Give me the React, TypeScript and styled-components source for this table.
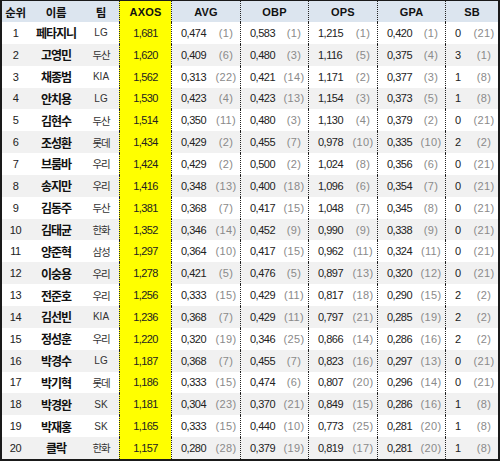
import React from "react";
import styled, { createGlobalStyle } from "styled-components";

const GlobalStyle = createGlobalStyle`
  html, body { margin: 0; padding: 0; background: #fff; }
  body { font-family: "Liberation Sans", "Noto Sans CJK KR", sans-serif; }
  * { box-sizing: border-box; }
`;

const COLS = "27px 54px 36px 52px 69px 68px 69px 68px 53px";

const Table = styled.div`
  width: 500px;
  height: 461px;
  border-top: 1px solid #1a1a1a;
  border-left: 2px solid #1a1a1a;
  border-right: 2px solid #1a1a1a;
  border-bottom: 2px solid #1a1a1a;
  display: flex;
  flex-direction: column;
`;

const HeaderRow = styled.div`
  display: grid;
  grid-template-columns: ${COLS};
  height: 21px;
  flex: none;
  background: #dce5ef;
`;

const Row = styled.div<{ $alt: boolean }>`
  display: grid;
  grid-template-columns: ${COLS};
  flex: 1;
  background: ${(p) => (p.$alt ? "#f1f1f1" : "#ffffff")};
`;

const Cell = styled.div<{ $dotted?: boolean; $yellow?: boolean }>`
  display: flex;
  align-items: center;
  justify-content: center;
  min-width: 0;
  border-left: ${(p) => (p.$dotted ? "1px dotted #222" : "none")};
  background: ${(p) => (p.$yellow ? "#ffff00" : "transparent")};
`;

const HeadText = styled.span<{ $ko?: boolean }>`
  font-family: ${(p) =>
    p.$ko ? '"Noto Sans CJK KR", sans-serif' : '"Liberation Sans", sans-serif'};
  font-weight: bold;
  font-size: ${(p) => (p.$ko ? "11.5px" : "11px")};
  color: #111;
  letter-spacing: ${(p) => (p.$ko ? "-0.3px" : "0.2px")};
`;

const RankNo = styled.span`
  font-family: "Liberation Sans", sans-serif;
  font-size: 11px;
  color: #222;
  letter-spacing: -0.4px;
`;

const Name = styled.span`
  font-family: "Noto Sans CJK KR", sans-serif;
  font-weight: bold;
  font-size: 12px;
  letter-spacing: -1px;
  color: #111;
`;

const Team = styled.span<{ $ko: boolean }>`
  font-family: ${(p) =>
    p.$ko ? '"Noto Sans CJK KR", sans-serif' : '"Liberation Sans", sans-serif'};
  font-size: ${(p) => (p.$ko ? "10.5px" : "10px")};
  letter-spacing: ${(p) => (p.$ko ? "-1.2px" : "0")};
  color: #333;
`;

const AxosValue = styled.span`
  font-family: "Liberation Sans", sans-serif;
  font-size: 11px;
  letter-spacing: -0.6px;
  color: #222;
`;

const StatCell = styled(Cell)`
  justify-content: space-between;
  padding-left: 9px;
`;

const Value = styled.span`
  font-family: "Liberation Sans", sans-serif;
  font-size: 11px;
  letter-spacing: -0.5px;
  color: #222;
`;

const Rank = styled.span`
  width: 28px;
  text-align: center;
  font-family: "Liberation Sans", sans-serif;
  font-size: 11px;
  letter-spacing: 0.3px;
  color: #8a8a8a;
`;

type Stat = [string, number];
type Player = {
  no: number;
  name: string;
  team: string;
  axos: string;
  stats: Stat[];
};

const data: Player[] = [
  { no: 1, name: "페타지니", team: "LG", axos: "1,681", stats: [["0,474", 1], ["0,583", 1], ["1,215", 1], ["0,420", 1], ["0", 21]] },
  { no: 2, name: "고영민", team: "두산", axos: "1,620", stats: [["0,409", 6], ["0,480", 3], ["1,116", 5], ["0,375", 4], ["3", 1]] },
  { no: 3, name: "채종범", team: "KIA", axos: "1,562", stats: [["0,313", 22], ["0,421", 14], ["1,171", 2], ["0,377", 3], ["1", 8]] },
  { no: 4, name: "안치용", team: "LG", axos: "1,530", stats: [["0,423", 4], ["0,423", 13], ["1,154", 3], ["0,373", 5], ["1", 8]] },
  { no: 5, name: "김현수", team: "두산", axos: "1,514", stats: [["0,350", 11], ["0,480", 3], ["1,130", 4], ["0,379", 2], ["0", 21]] },
  { no: 6, name: "조성환", team: "롯데", axos: "1,434", stats: [["0,429", 2], ["0,455", 7], ["0,978", 10], ["0,335", 10], ["2", 2]] },
  { no: 7, name: "브룸바", team: "우리", axos: "1,424", stats: [["0,429", 2], ["0,500", 2], ["1,024", 8], ["0,356", 6], ["0", 21]] },
  { no: 8, name: "송지만", team: "우리", axos: "1,416", stats: [["0,348", 13], ["0,400", 18], ["1,096", 6], ["0,354", 7], ["0", 21]] },
  { no: 9, name: "김동주", team: "두산", axos: "1,381", stats: [["0,368", 7], ["0,417", 15], ["1,048", 7], ["0,345", 8], ["0", 21]] },
  { no: 10, name: "김태균", team: "한화", axos: "1,352", stats: [["0,346", 14], ["0,452", 9], ["0,990", 9], ["0,338", 9], ["0", 21]] },
  { no: 11, name: "양준혁", team: "삼성", axos: "1,297", stats: [["0,364", 10], ["0,417", 15], ["0,962", 11], ["0,324", 11], ["0", 21]] },
  { no: 12, name: "이숭용", team: "우리", axos: "1,278", stats: [["0,421", 5], ["0,476", 5], ["0,897", 13], ["0,320", 12], ["0", 21]] },
  { no: 13, name: "전준호", team: "우리", axos: "1,256", stats: [["0,333", 15], ["0,429", 11], ["0,817", 18], ["0,290", 15], ["2", 2]] },
  { no: 14, name: "김선빈", team: "KIA", axos: "1,236", stats: [["0,368", 7], ["0,429", 11], ["0,797", 21], ["0,285", 19], ["2", 2]] },
  { no: 15, name: "정성훈", team: "우리", axos: "1,220", stats: [["0,320", 19], ["0,346", 25], ["0,866", 14], ["0,286", 16], ["2", 2]] },
  { no: 16, name: "박경수", team: "LG", axos: "1,187", stats: [["0,368", 7], ["0,455", 7], ["0,823", 16], ["0,297", 13], ["0", 21]] },
  { no: 17, name: "박기혁", team: "롯데", axos: "1,186", stats: [["0,333", 15], ["0,474", 6], ["0,807", 20], ["0,296", 14], ["0", 21]] },
  { no: 18, name: "박경완", team: "SK", axos: "1,181", stats: [["0,304", 23], ["0,370", 21], ["0,849", 15], ["0,286", 16], ["1", 8]] },
  { no: 19, name: "박재홍", team: "SK", axos: "1,165", stats: [["0,333", 15], ["0,440", 10], ["0,773", 25], ["0,281", 20], ["1", 8]] },
  { no: 20, name: "클락", team: "한화", axos: "1,157", stats: [["0,280", 28], ["0,379", 19], ["0,819", 17], ["0,281", 20], ["1", 8]] },
];

const statHeads = ["AVG", "OBP", "OPS", "GPA", "SB"];
const isKorean = (s: string) => /[\uac00-\ud7a3]/.test(s);

export default function App() {
  return (
    <>
      <GlobalStyle />
      <Table>
        <HeaderRow>
          <Cell><HeadText $ko>순위</HeadText></Cell>
          <Cell><HeadText $ko>이름</HeadText></Cell>
          <Cell><HeadText $ko>팀</HeadText></Cell>
          <Cell $dotted $yellow><HeadText>AXOS</HeadText></Cell>
          {statHeads.map((h) => (
            <Cell key={h} $dotted><HeadText>{h}</HeadText></Cell>
          ))}
        </HeaderRow>
        {data.map((p, i) => (
          <Row key={p.no} $alt={i % 2 === 1}>
            <Cell><RankNo>{p.no}</RankNo></Cell>
            <Cell><Name>{p.name}</Name></Cell>
            <Cell><Team $ko={isKorean(p.team)}>{p.team}</Team></Cell>
            <Cell $dotted $yellow><AxosValue>{p.axos}</AxosValue></Cell>
            {p.stats.map(([v, r], j) => (
              <StatCell key={j} $dotted>
                <Value>{v}</Value>
                <Rank>({r})</Rank>
              </StatCell>
            ))}
          </Row>
        ))}
      </Table>
    </>
  );
}
